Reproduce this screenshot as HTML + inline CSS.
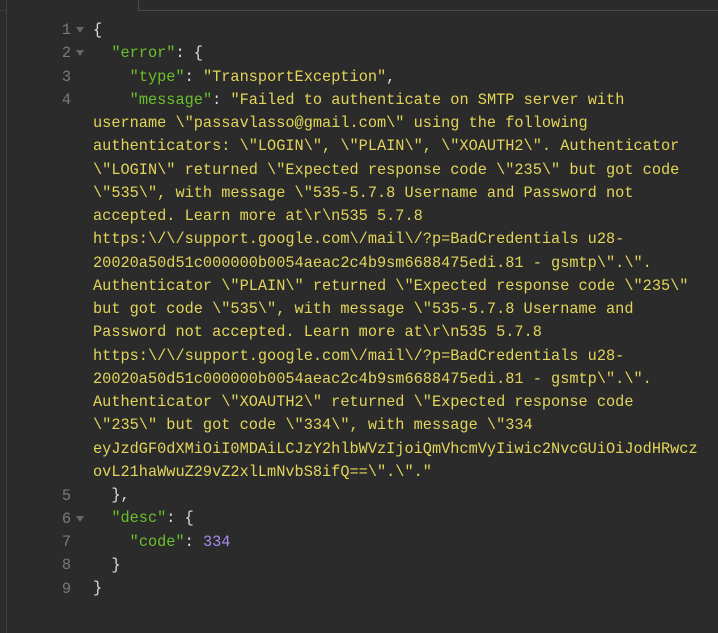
<!DOCTYPE html>
<html><head><meta charset="utf-8"><style>
html,body{margin:0;padding:0;background:#2b2b2b;width:718px;height:633px;overflow:hidden}
body{position:relative;font-family:"Liberation Mono",monospace;font-size:15.27px}
.vl{position:absolute;left:6px;top:0;width:1px;height:633px;background:#3d3d3d}
.hl{position:absolute;left:0;top:10px;width:6px;height:1px;background:#3d3d3d}
.box{position:absolute;left:138px;top:-2px;right:-2px;height:11px;border:1px solid #4a4a4a}
.ln{position:absolute;left:0;width:71px;text-align:right;color:#7a7a7a;line-height:23.25px}
.ar{position:absolute;left:76px;width:0;height:0;border-left:4px solid transparent;border-right:4px solid transparent;border-top:6px solid #666}
.code{position:absolute;left:93px;top:19px;width:620px;line-height:23.25px;color:#ddd;white-space:pre}
.k{color:#6cc02a}.s{color:#e3d55a}.n{color:#a88cf0}
</style></head><body>
<div class="vl"></div><div class="hl"></div><div class="box"></div>
<div class="ln" style="top:19px">1</div>
<div class="ln" style="top:42.25px">2</div>
<div class="ln" style="top:65.5px">3</div>
<div class="ln" style="top:88.75px">4</div>
<div class="ln" style="top:484.5px">5</div>
<div class="ln" style="top:507.75px">6</div>
<div class="ln" style="top:531px">7</div>
<div class="ln" style="top:554.25px">8</div>
<div class="ln" style="top:577.5px">9</div>
<div class="ar" style="top:27px"></div>
<div class="ar" style="top:50px"></div>
<div class="ar" style="top:516px"></div>
<div class="code">{
  <span class="k">"error"</span>: {
    <span class="k">"type"</span>: <span class="s">"TransportException"</span>,
    <span class="k">"message"</span>: <span class="s">"Failed to authenticate on SMTP server with
username \"passavlasso@gmail.com\" using the following
authenticators: \"LOGIN\", \"PLAIN\", \"XOAUTH2\". Authenticator
\"LOGIN\" returned \"Expected response code \"235\" but got code
\"535\", with message \"535-5.7.8 Username and Password not
accepted. Learn more at\r\n535 5.7.8
https:\/\/support.google.com\/mail\/?p=BadCredentials u28-
20020a50d51c000000b0054aeac2c4b9sm6688475edi.81 - gsmtp\".\".
Authenticator \"PLAIN\" returned \"Expected response code \"235\"
but got code \"535\", with message \"535-5.7.8 Username and
Password not accepted. Learn more at\r\n535 5.7.8
https:\/\/support.google.com\/mail\/?p=BadCredentials u28-
20020a50d51c000000b0054aeac2c4b9sm6688475edi.81 - gsmtp\".\".
Authenticator \"XOAUTH2\" returned \"Expected response code
\"235\" but got code \"334\", with message \"334
eyJzdGF0dXMiOiI0MDAiLCJzY2hlbWVzIjoiQmVhcmVyIiwic2NvcGUiOiJodHRwcz
ovL21haWwuZ29vZ2xlLmNvbS8ifQ==\".\"."</span>
  },
  <span class="k">"desc"</span>: {
    <span class="k">"code"</span>: <span class="n">334</span>
  }
}</div>
</body></html>
